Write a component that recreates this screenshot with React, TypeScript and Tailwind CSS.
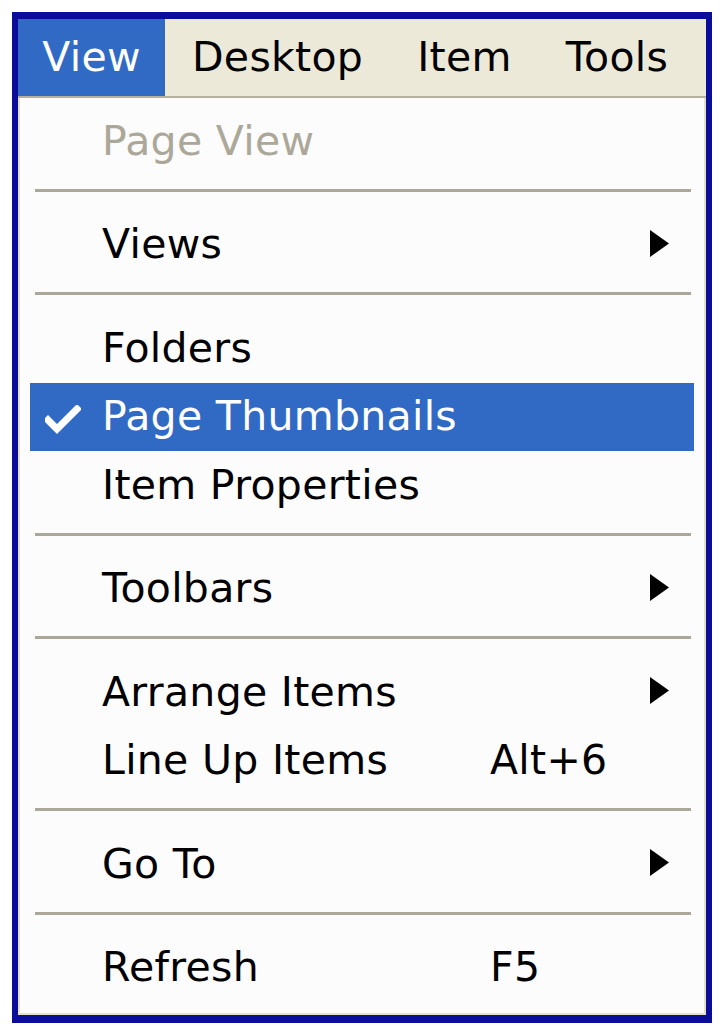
import React from "react";

type Row =
  | { kind: "sep" }
  | {
      kind: "item";
      label: string;
      disabled?: boolean;
      checked?: boolean;
      active?: boolean;
      submenu?: boolean;
      shortcut?: string;
    };

const rows: Row[] = [
  { kind: "item", label: "Page View", disabled: true },
  { kind: "sep" },
  { kind: "item", label: "Views", submenu: true },
  { kind: "sep" },
  { kind: "item", label: "Folders" },
  { kind: "item", label: "Page Thumbnails", checked: true, active: true },
  { kind: "item", label: "Item Properties" },
  { kind: "sep" },
  { kind: "item", label: "Toolbars", submenu: true },
  { kind: "sep" },
  { kind: "item", label: "Arrange Items", submenu: true },
  { kind: "item", label: "Line Up Items", shortcut: "Alt+6" },
  { kind: "sep" },
  { kind: "item", label: "Go To", submenu: true },
  { kind: "sep" },
  { kind: "item", label: "Refresh", shortcut: "F5" },
];

const menus = ["View", "Desktop", "Item", "Tools"];

function CheckMark() {
  return (
    <svg width="36" height="30" viewBox="0 0 36 30" className="absolute left-[15px] top-[22px]">
      <path d="M3 15 L12 24 L32 4" fill="none" stroke="white" strokeWidth="7" strokeLinecap="square" />
    </svg>
  );
}

function SubmenuArrow() {
  return (
    <svg width="19" height="27" viewBox="0 0 19 27" className="ml-auto mr-[25px] mt-[-3px]">
      <polygon points="0,0 19,13.5 0,27" fill="black" />
    </svg>
  );
}

function MenuRow({ row }: { row: Row }) {
  if (row.kind === "sep") {
    return (
      <div className="h-[35px] pt-[13px] pl-[5px] pr-[3px]">
        <div className="h-[3px] bg-[#aca899]" />
      </div>
    );
  }

  return (
    <div
      className={
        "relative flex h-[68.5px] items-center pl-[72px] " +
        (row.active ? "bg-[#316ac5] text-white" : row.disabled ? "text-[#aca899]" : "text-black")
      }
    >
      {row.checked && <CheckMark />}
      <span className="w-[388px] leading-none">{row.label}</span>
      {row.shortcut && <span className="leading-none">{row.shortcut}</span>}
      {row.submenu && <SubmenuArrow />}
    </div>
  );
}

export default function App() {
  return (
    <div
      className="h-[1036px] w-[724px] bg-white pl-[12px] pt-[12px] text-[41px] tracking-[0.3px]"
      style={{ fontFamily: '"DejaVu Sans", Verdana, sans-serif' }}
    >
      <div className="flex h-[1011px] w-[700px] flex-col border-b-[8px] border-l-[6px] border-r-[6px] border-t-[7px] border-[#0a0c9a]">
        {/* menu bar */}
        <div className="flex h-[79px] shrink-0 items-stretch border-b-[2px] border-[#b5b19e] bg-[#ece9d8]">
          {menus.map((m, i) => (
            <div
              key={m}
              className={
                "flex items-center leading-none " +
                (i === 0 ? "w-[147px] justify-center bg-[#316ac5] text-white" : "px-[27px] text-black")
              }
            >
              {m}
            </div>
          ))}
        </div>

        {/* dropdown body */}
        <div className="flex-1 border-b-[2px] border-l-[2px] border-r-[2px] border-[#e6e1c6] bg-[#fcfcfc] px-[10px] pt-[9px]">
          {rows.map((r, i) => (
            <MenuRow key={i} row={r} />
          ))}
        </div>
      </div>
    </div>
  );
}
